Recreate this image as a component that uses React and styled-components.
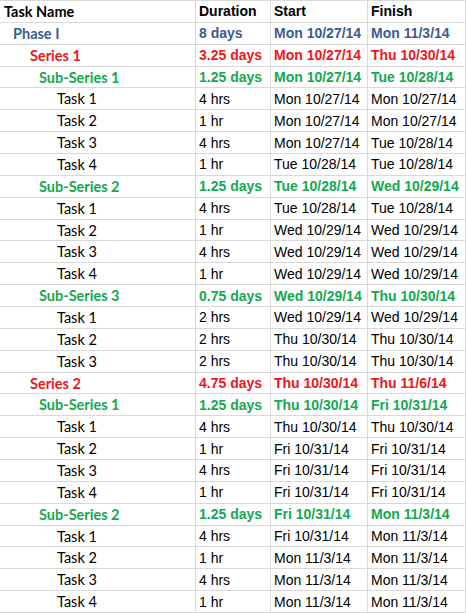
import React from 'react';
import styled, { createGlobalStyle } from 'styled-components';

const GlobalStyle = createGlobalStyle`
  html, body { margin: 0; padding: 0; background: #fff; }
  body { font-family: "Liberation Sans", Arial, sans-serif; }
`;

const colors = {
  head: '#000000',
  phase: '#3b5c8f',
  series: '#ee1620',
  sub: '#14a851',
  task: '#000000',
};

const indents = { head: 4, phase: 13, series: 30, sub: 39, task: 57 };

const rows = [
  ['phase', 'Phase I', '8 days', 'Mon 10/27/14', 'Mon 11/3/14'],
  ['series', 'Series 1', '3.25 days', 'Mon 10/27/14', 'Thu 10/30/14'],
  ['sub', 'Sub-Series 1', '1.25 days', 'Mon 10/27/14', 'Tue 10/28/14'],
  ['task', 'Task 1', '4 hrs', 'Mon 10/27/14', 'Mon 10/27/14'],
  ['task', 'Task 2', '1 hr', 'Mon 10/27/14', 'Mon 10/27/14'],
  ['task', 'Task 3', '4 hrs', 'Mon 10/27/14', 'Tue 10/28/14'],
  ['task', 'Task 4', '1 hr', 'Tue 10/28/14', 'Tue 10/28/14'],
  ['sub', 'Sub-Series 2', '1.25 days', 'Tue 10/28/14', 'Wed 10/29/14'],
  ['task', 'Task 1', '4 hrs', 'Tue 10/28/14', 'Tue 10/28/14'],
  ['task', 'Task 2', '1 hr', 'Wed 10/29/14', 'Wed 10/29/14'],
  ['task', 'Task 3', '4 hrs', 'Wed 10/29/14', 'Wed 10/29/14'],
  ['task', 'Task 4', '1 hr', 'Wed 10/29/14', 'Wed 10/29/14'],
  ['sub', 'Sub-Series 3', '0.75 days', 'Wed 10/29/14', 'Thu 10/30/14'],
  ['task', 'Task 1', '2 hrs', 'Wed 10/29/14', 'Wed 10/29/14'],
  ['task', 'Task 2', '2 hrs', 'Thu 10/30/14', 'Thu 10/30/14'],
  ['task', 'Task 3', '2 hrs', 'Thu 10/30/14', 'Thu 10/30/14'],
  ['series', 'Series 2', '4.75 days', 'Thu 10/30/14', 'Thu 11/6/14'],
  ['sub', 'Sub-Series 1', '1.25 days', 'Thu 10/30/14', 'Fri 10/31/14'],
  ['task', 'Task 1', '4 hrs', 'Thu 10/30/14', 'Thu 10/30/14'],
  ['task', 'Task 2', '1 hr', 'Fri 10/31/14', 'Fri 10/31/14'],
  ['task', 'Task 3', '4 hrs', 'Fri 10/31/14', 'Fri 10/31/14'],
  ['task', 'Task 4', '1 hr', 'Fri 10/31/14', 'Fri 10/31/14'],
  ['sub', 'Sub-Series 2', '1.25 days', 'Fri 10/31/14', 'Mon 11/3/14'],
  ['task', 'Task 1', '4 hrs', 'Fri 10/31/14', 'Mon 11/3/14'],
  ['task', 'Task 2', '1 hr', 'Mon 11/3/14', 'Mon 11/3/14'],
  ['task', 'Task 3', '4 hrs', 'Mon 11/3/14', 'Mon 11/3/14'],
  ['task', 'Task 4', '1 hr', 'Mon 11/3/14', 'Mon 11/3/14'],
];

const Sheet = styled.div`
  width: 466px;
  border-top: 1px solid #d9d9d9;
  display: grid;
  grid-template-columns: 196px 75px 97px 98px;
  grid-auto-rows: 21.87px;
`;

const Cell = styled.div`
  box-sizing: border-box;
  border-right: 1px solid #d9d9d9;
  border-bottom: 1px solid #d9d9d9;
  display: flex;
  align-items: center;
  padding-left: ${({ $indent }) => $indent}px;
  font-family: ${({ $label }) =>
    $label ? 'Lato, "Liberation Sans", sans-serif' : '"Liberation Sans", Arial, sans-serif'};
  font-size: ${({ $label }) => ($label ? '14.5px' : '14px')};
  font-weight: ${({ $level }) => ($level === 'task' ? 400 : 700)};
  color: ${({ $level }) => colors[$level]};
  white-space: nowrap;
  overflow: hidden;
`;

const Row = ({ level, cells }) => (
  <>
    <Cell $level={level} $label $indent={indents[level]}>{cells[0]}</Cell>
    <Cell $level={level} $indent={3}>{cells[1]}</Cell>
    <Cell $level={level} $indent={3}>{cells[2]}</Cell>
    <Cell $level={level} $indent={3}>{cells[3]}</Cell>
  </>
);

export default function App() {
  return (
    <>
      <GlobalStyle />
      <Sheet>
        <Row level="head" cells={['Task Name', 'Duration', 'Start', 'Finish']} />
        {rows.map(([level, ...cells], i) => (
          <Row key={i} level={level} cells={cells} />
        ))}
      </Sheet>
    </>
  );
}
